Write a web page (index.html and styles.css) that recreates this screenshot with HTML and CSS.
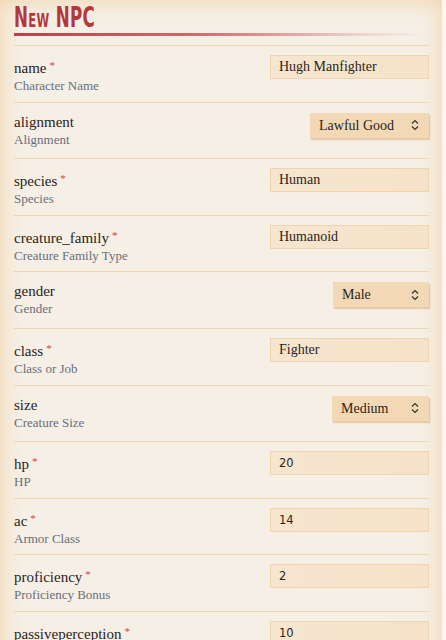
FILE: index.html
```html
<!DOCTYPE html>
<html>
<head>
<meta charset="utf-8">
<link rel="stylesheet" href="styles.css">
</head>
<body>
<div class="page">
  <div class="header">
    <h1 class="title">New NPC</h1>
    <div class="title-rule"></div>
  </div>
  <div class="form">
    <div class="row">
      <div class="label"><div class="name">name<span class="req">*</span></div><div class="desc">Character Name</div></div>
      <div class="input">Hugh Manfighter</div>
    </div>
    <div class="row">
      <div class="label"><div class="name">alignment</div><div class="desc">Alignment</div></div>
      <div class="select w-align">Lawful Good</div>
    </div>
    <div class="row">
      <div class="label"><div class="name">species<span class="req">*</span></div><div class="desc">Species</div></div>
      <div class="input">Human</div>
    </div>
    <div class="row">
      <div class="label"><div class="name">creature_family<span class="req">*</span></div><div class="desc">Creature Family Type</div></div>
      <div class="input">Humanoid</div>
    </div>
    <div class="row">
      <div class="label"><div class="name">gender</div><div class="desc">Gender</div></div>
      <div class="select w-gender">Male</div>
    </div>
    <div class="row">
      <div class="label"><div class="name">class<span class="req">*</span></div><div class="desc">Class or Job</div></div>
      <div class="input">Fighter</div>
    </div>
    <div class="row">
      <div class="label"><div class="name">size</div><div class="desc">Creature Size</div></div>
      <div class="select w-size">Medium</div>
    </div>
    <div class="row">
      <div class="label"><div class="name">hp<span class="req">*</span></div><div class="desc">HP</div></div>
      <div class="input num">20</div>
    </div>
    <div class="row">
      <div class="label"><div class="name">ac<span class="req">*</span></div><div class="desc">Armor Class</div></div>
      <div class="input num">14</div>
    </div>
    <div class="row">
      <div class="label"><div class="name">proficiency<span class="req">*</span></div><div class="desc">Proficiency Bonus</div></div>
      <div class="input num">2</div>
    </div>
    <div class="row">
      <div class="label"><div class="name">passiveperception<span class="req">*</span></div><div class="desc">Passive Perception</div></div>
      <div class="input num">10</div>
    </div>
    <div class="row">
      <div class="label"><div class="name">speed<span class="req">*</span></div><div class="desc">Speed</div></div>
      <div class="input num">30</div>
    </div>
  </div>
</div>
</body>
</html>
```
FILE: styles.css
```css
html, body {
  margin: 0;
  padding: 0;
  background: #fbf6ef;
}
.page {
  width: 442px;
  min-height: 800px;
  box-sizing: border-box;
  padding: 0 13px 0 14px;
  background: #f5efe6;
  box-shadow: inset 0 0 20px 2px #f3d6ae;
  font-family: "Liberation Serif", serif;
}
.header {
  padding-top: 2px;
  border-bottom: 1px solid #f2d6b2;
  height: 43px;
  box-sizing: content-box;
}
.title {
  margin: 0;
  font-family: "DejaVu Sans Condensed", "DejaVu Sans", sans-serif;
  font-weight: bold;
  font-variant: small-caps;
  font-size: 29px;
  line-height: 30px;
  color: #b4373b;
  transform: scaleX(0.64);
  transform-origin: left center;
  letter-spacing: 0.5px;
  height: 30px;
}
.title-rule {
  margin-top: 1px;
  height: 3px;
  width: 410px;
  background: linear-gradient(to right, #bd3f43 0%, #cf6b6d 45%, rgba(230,170,170,0.4) 85%, rgba(240,200,200,0) 100%);
}
.row {
  display: flex;
  justify-content: space-between;
  align-items: flex-start;
  height: 56.6px;
  box-sizing: border-box;
  padding-top: 9px;
  border-bottom: 1px solid #f2d6b2;
}
.label {
  padding-top: 1px;
}
.name {
  font-size: 15px;
  line-height: 18px;
  color: #2b2320;
}
.req {
  color: #d0404a;
  font-size: 11px;
  vertical-align: 4px;
  margin-left: 3px;
}
.desc {
  font-size: 13px;
  line-height: 18px;
  color: #6a6e79;
}
.input {
  width: 159px;
  height: 24px;
  box-sizing: border-box;
  border: 1px solid #f0d4ae;
  background: linear-gradient(to right, #f6e6d0, #f5e2c8);
  font-size: 14px;
  line-height: 22px;
  padding: 0 8px;
  color: #2b2320;
}
.input.num {
  font-family: "DejaVu Sans", sans-serif;
  font-size: 11.5px;
}
.select {
  margin-top: 1px;
  height: 25px;
  box-sizing: border-box;
  background-color: #f3d8b5;
  background-image: url("data:image/svg+xml;utf8,<svg xmlns='http://www.w3.org/2000/svg' width='8' height='12' viewBox='0 0 8 12'><path d='M1 4.5 L4 1.5 L7 4.5 M1 7.5 L4 10.5 L7 7.5' fill='none' stroke='%23333' stroke-width='1.2'/></svg>");
  background-repeat: no-repeat;
  background-position: right 10px center;
  box-shadow: 1px 2px 1px rgba(214, 160, 100, 0.45);
  font-size: 14px;
  line-height: 25px;
  padding: 0 0 0 9px;
  color: #2b2320;
}
.w-align { width: 119px; }
.w-gender { width: 96px; }
.w-size { width: 97px; }
```
